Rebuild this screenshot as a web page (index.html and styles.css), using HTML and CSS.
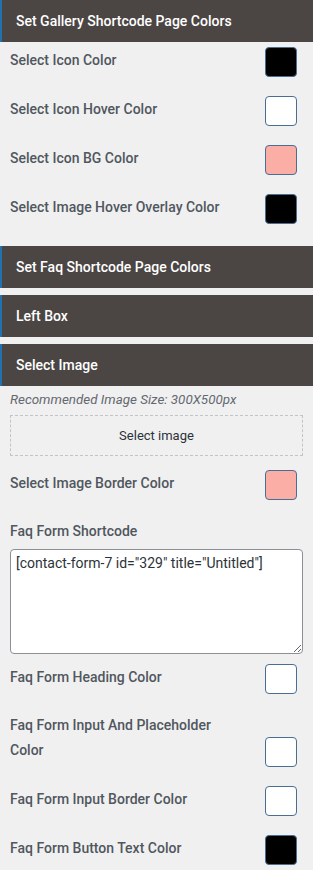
FILE: index.html
```html
<!DOCTYPE html>
<html lang="en">
<head>
    <meta charset="UTF-8">
    <meta name="viewport" content="width=device-width, initial-scale=1.0">
    <title>Shortcode Colors</title>
    <link rel="stylesheet" href="styles.css">
</head>
<body>
    <div class="panel-heading">Set Gallery Shortcode Page Colors</div>
    <div class="panel-body">
        <div class="field-row">
            <span class="field-label">Select Icon Color</span>
            <button class="swatch swatch-black"></button>
        </div>
        <div class="field-row">
            <span class="field-label">Select Icon Hover Color</span>
            <button class="swatch swatch-white"></button>
        </div>
        <div class="field-row">
            <span class="field-label">Select Icon BG Color</span>
            <button class="swatch swatch-pink"></button>
        </div>
        <div class="field-row">
            <span class="field-label">Select Image Hover Overlay Color</span>
            <button class="swatch swatch-black"></button>
        </div>
    </div>

    <div class="panel-heading">Set Faq Shortcode Page Colors</div>
    <div class="panel-heading">Left Box</div>
    <div class="panel-heading">Select Image</div>
    <div class="panel-body panel-body-image">
        <p class="note">Recommended Image Size: 300X500px</p>
        <div class="upload-box">Select image</div>
        <div class="field-row">
            <span class="field-label">Select Image Border Color</span>
            <button class="swatch swatch-pink"></button>
        </div>
        <div class="field-block">
            <span class="field-label">Faq Form Shortcode</span>
            <textarea class="shortcode">[contact-form-7 id="329" title="Untitled"]</textarea>
        </div>
        <div class="field-row">
            <span class="field-label">Faq Form Heading Color</span>
            <button class="swatch swatch-white"></button>
        </div>
        <div class="field-row">
            <span class="field-label">Faq Form Input And Placeholder Color</span>
            <button class="swatch swatch-white"></button>
        </div>
        <div class="field-row">
            <span class="field-label">Faq Form Input Border Color</span>
            <button class="swatch swatch-white"></button>
        </div>
        <div class="field-row">
            <span class="field-label">Faq Form Button Text Color</span>
            <button class="swatch swatch-black"></button>
        </div>
    </div>
</body>
</html>
```

FILE: styles.css
```css
body {
    font-family: Roboto, 'Liberation Sans', Arial, sans-serif;
    color: #50575e;
    margin: 0;
    padding: 0;
    background-color: #f0f0f1;
}
.panel-heading {
    height: 42px;
    display: flex;
    align-items: center;
    padding-left: 14px;
    background-color: #4b4644;
    border-left: 2px solid #2271b1;
    color: #ffffff;
    font-size: 14px;
    font-weight: 500;
    margin-bottom: 7px;
}
.panel-body {
    padding: 5px 16px 22px 10px;
    margin-top: -7px;
}
.panel-body-image {
    padding-top: 4px;
}
.field-row {
    display: flex;
    justify-content: space-between;
    align-items: flex-end;
    margin-bottom: 19px;
}
.field-row:last-child {
    margin-bottom: 0;
}
.field-label {
    display: block;
    font-size: 14px;
    font-weight: 500;
    line-height: 25px;
    padding-bottom: 4px;
    max-width: 230px;
}
.swatch {
    flex: none;
    width: 32px;
    height: 30px;
    padding: 0;
    border: 1px solid #4a6d93;
    border-radius: 4px;
    box-sizing: border-box;
}
.swatch-black {
    background-color: #000000;
}
.swatch-white {
    background-color: #ffffff;
}
.swatch-pink {
    background-color: #fbaea6;
}
.note {
    margin: 0 0 5px;
    font-size: 13.4px;
    font-style: italic;
    line-height: 20px;
    color: #646970;
}
.upload-box {
    height: 41px;
    box-sizing: border-box;
    margin-right: -6px;
    border: 1px dashed #c3c4c7;
    display: flex;
    align-items: center;
    justify-content: center;
    font-size: 13px;
    color: #2c3338;
    margin-bottom: 14px;
}
.field-block {
    margin-bottom: 10px;
}
.field-block .field-label {
    padding-bottom: 0;
    margin-bottom: 5px;
}
.shortcode {
    display: block;
    width: calc(100% + 6px);
    height: 105px;
    box-sizing: border-box;
    margin: 0;
    padding: 3px 5px;
    border: 1px solid #8c8f94;
    border-radius: 4px;
    background-color: #ffffff;
    font-family: Roboto, 'Liberation Sans', Arial, sans-serif;
    font-size: 14px;
    line-height: 20px;
    color: #2c3338;
}
```
